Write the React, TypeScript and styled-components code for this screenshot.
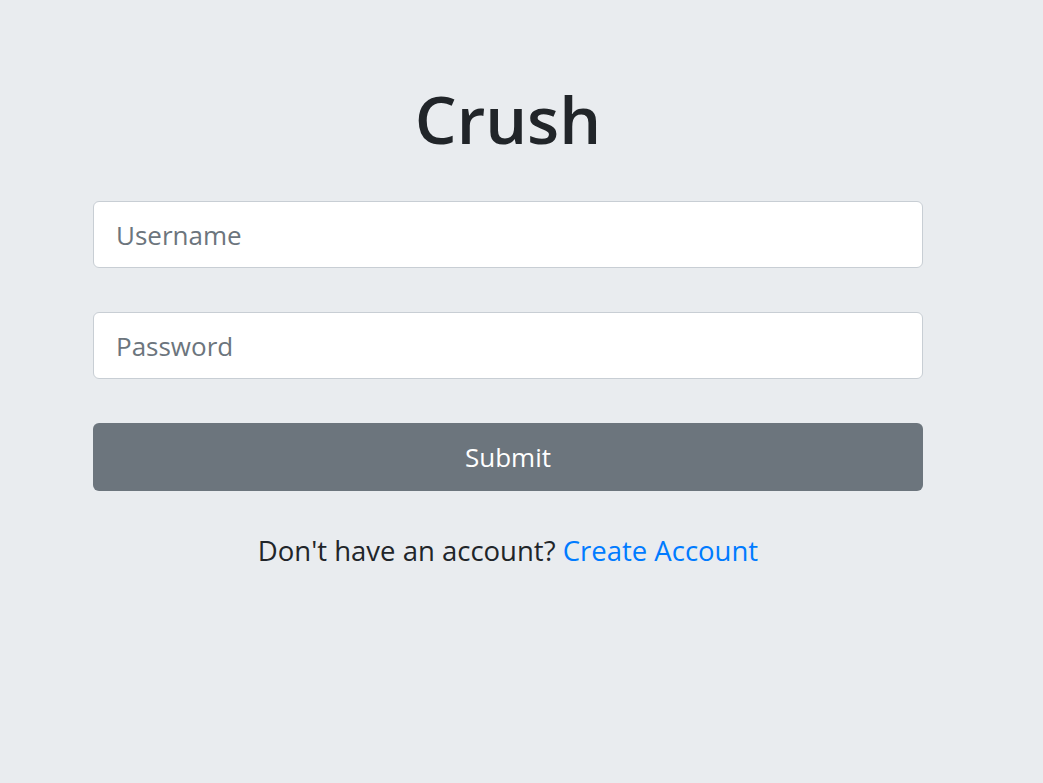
import React, { useState } from 'react'
import styled, { createGlobalStyle } from 'styled-components'

const GlobalStyle = createGlobalStyle`
  html, body {
    margin: 0;
    padding: 0;
    background: #e9ecef;
    font-family: "Open Sans", "Noto Sans", sans-serif;
    color: #212529;
  }
`

const Login = () => {
  const [username, setUsername] = useState('')
  const [password, setPassword] = useState('')

  return (
    <Page>
      <GlobalStyle />
      <Form onSubmit={(e) => e.preventDefault()}>
        <Title>Crush</Title>
        <Field
          type="text"
          placeholder="Username"
          value={username}
          onChange={(e) => setUsername(e.target.value)}
        />
        <Field
          type="password"
          placeholder="Password"
          value={password}
          onChange={(e) => setPassword(e.target.value)}
        />
        <SubmitButton type="submit">Submit</SubmitButton>
        <Footer>
          Don't have an account? <FooterLink href="#">Create Account</FooterLink>
        </Footer>
      </Form>
    </Page>
  )
}

export default Login

const Page = styled.div`
  min-height: 783px;
  padding: 0 0 0 93px;
  box-sizing: border-box;
`

const Form = styled.form`
  width: 830px;
  display: flex;
  flex-direction: column;
  padding-top: 70px;
`

const Title = styled.h1`
  margin: 0 0 35px;
  font-size: 66px;
  font-weight: 600;
  line-height: 96px;
  text-align: center;
  color: #212529;
`

const Field = styled.input`
  box-sizing: border-box;
  height: 67px;
  margin-bottom: 44px;
  padding: 0 22px;
  border: 1px solid #c8ced4;
  border-radius: 6px;
  background: #fff;
  font-family: inherit;
  font-size: 26px;
  color: #495057;
  outline: none;

  &::placeholder {
    color: #6c757d;
  }
`

const SubmitButton = styled.button`
  box-sizing: border-box;
  height: 68px;
  border: none;
  border-radius: 6px;
  background: #6c757d;
  color: #fff;
  font-family: inherit;
  font-size: 26px;
  cursor: pointer;
`

const Footer = styled.p`
  margin: 42px 0 0;
  text-align: center;
  font-size: 27.5px;
  line-height: 36px;
`

const FooterLink = styled.a`
  color: #007bff;
  text-decoration: none;
`
